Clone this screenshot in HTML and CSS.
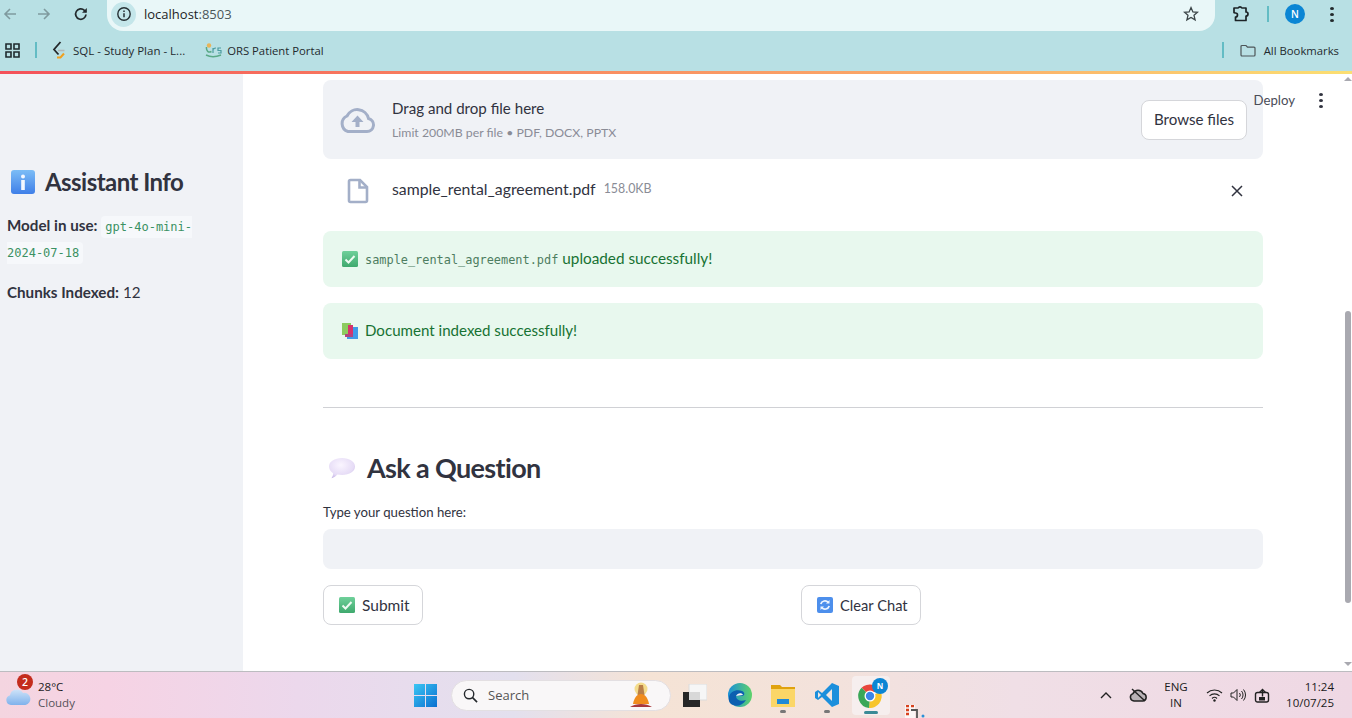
FILE: index.html
```html
<!DOCTYPE html>
<html lang="en">
<head>
<meta charset="utf-8">
<title>localhost:8503</title>
<link rel="stylesheet" href="styles.css">
</head>
<body>
<div class="screen">
  <header class="browser">
    <div class="toolbar">
      <svg class="nav nav-back" viewBox="0 0 16 16"><path d="M14 8H3M8 3L3 8l5 5" fill="none" stroke="#7f9a9e" stroke-width="1.6"/></svg>
      <svg class="nav nav-fwd" viewBox="0 0 16 16"><path d="M2 8h11M8 3l5 5-5 5" fill="none" stroke="#7f9a9e" stroke-width="1.6"/></svg>
      <svg class="nav nav-reload" viewBox="0 0 16 16"><path d="M13 8.5A5.2 5.2 0 1 1 11.4 4.3L13 5.8" fill="none" stroke="#22292c" stroke-width="1.7"/><path d="M13.8 2v4.8H9z" fill="#22292c"/></svg>
      <div class="omnibox">
        <span class="site-info"><svg viewBox="0 0 16 16"><circle cx="8" cy="8" r="6.2" fill="none" stroke="#263034" stroke-width="1.4"/><path d="M8 7.2v4M8 4.6v1.3" stroke="#263034" stroke-width="1.5"/></svg></span>
        <span class="url">localhost<span class="url-port">:8503</span></span>
        <svg class="star" viewBox="0 0 16 16"><path d="M8 1.6l1.9 4.3 4.6.4-3.5 3 1.1 4.6L8 11.4l-4.1 2.5L5 9.3l-3.5-3 4.6-.4z" fill="none" stroke="#3c4548" stroke-width="1.3"/></svg>
      </div>
      <svg class="puzzle" viewBox="0 0 18 18"><path d="M2 3h4.2a2 2 0 0 1 3.6 0H14v4a2 2 0 0 1 0 4v4.5H3.5V12a2 2 0 0 0 0-4L2 7.6z" fill="none" stroke="#1c2326" stroke-width="1.7" stroke-linejoin="round"/></svg>
      <span class="divider divider-top"></span>
      <span class="avatar">N</span>
      <span class="kebab kebab-chrome"><i></i><i></i><i></i></span>
    </div>
    <div class="bookmarks">
      <svg class="apps" viewBox="0 0 15 15"><path d="M1 1h5v5H1zM9 1h5v5H9zM1 9h5v5H1zM9 9h5v5H9z" fill="none" stroke="#1f2a2e" stroke-width="1.6"/></svg>
      <span class="divider divider-apps"></span>
      <svg class="bm-sql" viewBox="0 0 14 18"><path d="M8.500 1L2 8.500l4.500 5" fill="none" stroke="#23282b" stroke-width="1.800"/><path d="M5 16.500h3.500l3.500-4" fill="none" stroke="#f0a020" stroke-width="2"/><path d="M6 9.500h6.500" stroke="#b4b8b8" stroke-width="1.600"/></svg>
      <span class="bm-text bm-sql-text">SQL - Study Plan - L...</span>
      <svg class="bm-ors" viewBox="0 0 17 16"><circle cx="4" cy="3.500" r="2.200" fill="#e8b458"/><path d="M1.500 5c-.5 4 2 6 5 4.500M1 13c4 2 10 2 15 0" fill="none" stroke="#5aa987" stroke-width="1.500"/><path d="M8 6v5M8.500 7c1-1 2-1 2.500-1M16 6h-3v2.500h3V11h-3" fill="none" stroke="#4c9ca0" stroke-width="1.200"/></svg>
      <span class="bm-text bm-ors-text">ORS Patient Portal</span>
      <span class="bm-spacer"></span>
      <span class="divider divider-all"></span>
      <svg class="bm-folder" viewBox="0 0 16 13"><path d="M1 2.500a1 1 0 0 1 1-1h4l1.500 1.700H14a1 1 0 0 1 1 1V11a1 1 0 0 1-1 1H2a1 1 0 0 1-1-1z" fill="none" stroke="#4d5558" stroke-width="1.200"/></svg>
      <span class="bm-text bm-all-text">All Bookmarks</span>
    </div>
    <div class="accent"></div>
  </header>

  <div class="app">
    <aside class="sidebar">
      <h2 class="side-title">
        <svg class="side-emoji" viewBox="0 0 24 24"><defs><linearGradient id="blue" x1="0" y1="0" x2="0" y2="1"><stop offset="0" stop-color="#7cbdf6"/><stop offset="1" stop-color="#3f7fe8"/></linearGradient></defs><rect width="24" height="24" rx="3" fill="url(#blue)"/><circle cx="12" cy="6.500" r="2" fill="#f4f8ff"/><rect x="10.200" y="10" width="3.600" height="10" fill="#f4f8ff"/></svg>
        Assistant Info
      </h2>
      <p class="side-line"><strong>Model in use:</strong> <code class="side-code">gpt-4o-mini-<br>2024-07-18</code></p>
      <p class="side-chunks"><strong>Chunks Indexed:</strong> 12</p>
    </aside>

    <main class="content">
      <section class="uploader">
        <svg class="cloud" viewBox="0 0 37 25"><path d="M29.500 10.500A11.500 11.500 0 0 0 8 8 8.300 8.300 0 0 0 9 23.500h19a6.600 6.600 0 0 0 1.500-13z" fill="none" stroke="#a3afc8" stroke-width="3"/><path d="M18.500 7.500l6 6.500h-4V19h-4v-5h-4z" fill="#a3afc8"/></svg>
        <div class="upload-text">
          <div class="drop-title">Drag and drop file here</div>
          <div class="drop-limit">Limit 200MB per file • PDF, DOCX, PPTX</div>
        </div>
        <button class="btn btn-browse">Browse files</button>
      </section>

      <section class="file-row">
        <svg class="file-icon" viewBox="0 0 22 26"><path d="M2 3.500A1.500 1.500 0 0 1 3.500 2H13l7 7v13.500a1.500 1.500 0 0 1-1.500 1.500h-15A1.500 1.500 0 0 1 2 22.500z" fill="none" stroke="#a3afc8" stroke-width="2.600"/><path d="M12.500 2v7.500H20" fill="none" stroke="#a3afc8" stroke-width="2.600"/></svg>
        <span class="file-name">sample_rental_agreement.pdf</span>
        <span class="file-size">158.0KB</span>
        <svg class="file-x" viewBox="0 0 12 12"><path d="M1 1l10 10M11 1L1 11" stroke="#31333f" stroke-width="1.500"/></svg>
      </section>

      <div class="alert">
        <svg class="emoji-16" viewBox="0 0 16 16"><use href="#check-emoji"/></svg>
        <code class="alert-code">sample_rental_agreement.pdf</code>
        <span class="alert-tail">uploaded successfully!</span>
      </div>
      <div class="alert">
        <svg class="emoji-16" viewBox="0 0 16 16"><rect x="0" y="0" width="9" height="12" fill="#8ccb5e"/><rect x="6" y="2" width="5" height="13" fill="#d6336c"/><rect x="3" y="11" width="8" height="3" fill="#b0457e"/><rect x="11" y="4" width="5" height="12" fill="#3f9be8"/><rect x="5" y="14" width="11" height="2" fill="#3f9be8"/></svg>
        <span class="alert-text">Document indexed successfully!</span>
      </div>

      <hr class="rule">

      <h2 class="ask-title">
        <svg class="bubble" viewBox="0 0 28 22"><defs><radialGradient id="bub" cx=".45" cy=".35" r=".72"><stop offset="0" stop-color="#faf5ff"/><stop offset=".7" stop-color="#e6dcf6"/><stop offset="1" stop-color="#bfaee4"/></radialGradient></defs><path d="M14 1c7.500 0 13 3.600 13 8.500S21.500 18 14 18c-1.500 0-3 0-4.500-.4-1.500 1.500-3.500 3-6 3.600 1-1.500 1.600-3 1.600-5C2.500 14.500 1 12 1 9.500 1 4.600 6.500 1 14 1z" fill="url(#bub)"/></svg>
        Ask a Question
      </h2>
      <label class="q-label" for="q">Type your question here:</label>
      <input class="q-input" id="q" type="text">

      <div class="actions">
        <div class="action-col">
          <button class="btn btn-action btn-submit">
            <svg class="emoji-16" viewBox="0 0 16 16"><defs><linearGradient id="chk" x1="0" y1="0" x2="0" y2="1"><stop offset="0" stop-color="#6fd09a"/><stop offset="1" stop-color="#3fa96e"/></linearGradient><g id="check-emoji"><rect width="16" height="16" rx="1.500" fill="url(#chk)"/><path d="M3.500 8.500l3 3 6-6.500" fill="none" stroke="#eefaf2" stroke-width="2"/></g></defs><use href="#check-emoji"/></svg>
            Submit
          </button>
        </div>
        <div class="action-col">
          <button class="btn btn-action btn-clear">
            <svg class="emoji-16" viewBox="0 0 16 16"><rect width="16" height="16" rx="2" fill="#4d8fec"/><path d="M3.800 7a4.300 4.300 0 0 1 7.400-1.600M12.200 9a4.300 4.300 0 0 1-7.400 1.600" fill="none" stroke="#eef5ff" stroke-width="1.700"/><path d="M12.500 3v3.500H9zM3.500 13V9.500H7z" fill="#eef5ff"/></svg>
            Clear Chat
          </button>
        </div>
      </div>
    </main>

    <div class="scrollbar">
      <span class="sb-up"></span>
      <span class="sb-thumb"></span>
      <span class="sb-down"></span>
    </div>

    <div class="deploy-bar">
      <span class="deploy">Deploy</span>
      <span class="kebab kebab-app"><i></i><i></i><i></i></span>
    </div>
  </div>

  <footer class="taskbar">
    <div class="weather">
      <svg class="weather-icon" viewBox="0 0 26 20"><defs><linearGradient id="wcl" x1="0" y1="0" x2="0" y2="1"><stop offset="0" stop-color="#cfe3f8"/><stop offset="1" stop-color="#7fb2ec"/></linearGradient></defs><path d="M6 19a5 5 0 0 1-1-9.800A7 7 0 0 1 18 7a6 6 0 0 1 2.500 12z" fill="url(#wcl)"/></svg>
      <span class="badge">2</span>
      <div class="weather-text">
        <span class="temp">28°C</span>
        <span class="cond">Cloudy</span>
      </div>
    </div>

    <div class="tasks">
      <svg class="win" viewBox="0 0 23 23"><defs><linearGradient id="wg" x1="0" y1="0" x2="1" y2="1"><stop offset="0" stop-color="#3bc6f4"/><stop offset="1" stop-color="#0a6fd0"/></linearGradient></defs><path d="M0 0h11v11H0zM12 0h11v11H12zM0 12h11v11H0zM12 12h11v11H12z" fill="url(#wg)"/></svg>
      <div class="search">
        <svg class="search-glass" viewBox="0 0 16 16"><circle cx="6.500" cy="6.500" r="5" fill="none" stroke="#24282c" stroke-width="1.500"/><path d="M10.200 10.200L15 15" stroke="#24282c" stroke-width="1.700"/></svg>
        <span class="search-text">Search</span>
        <svg class="search-art" viewBox="0 0 24 26"><circle cx="12" cy="7" r="6.500" fill="#f4dc8c"/><path d="M10 3h4l1.500 10h-7z" fill="#b97f48"/><path d="M4 22c1-6 4-10 8-10s7 4 8 10z" fill="#f08c1e"/><path d="M1 25c6-4 16-4 22 0z" fill="#a8383c"/></svg>
      </div>
      <svg class="taskview" viewBox="0 0 24 23"><rect x="6" y="0" width="18" height="16" fill="#f6f6f6" stroke="#dcdcdc"/><rect x="0" y="8" width="17" height="15" fill="#262626"/><rect x="6" y="8" width="11" height="8" fill="#d8d8d8"/></svg>
      <svg class="edge" viewBox="0 0 24 24"><defs><linearGradient id="eg" x1="0" y1="0" x2="1" y2="0"><stop offset="0" stop-color="#1a8fd8"/><stop offset="1" stop-color="#5fd36a"/></linearGradient></defs><circle cx="12" cy="12" r="12" fill="url(#eg)"/><path d="M1 14c1-6 8-8 13-6 3 1 3 5 0 5H8c0 4 5 6 10 4-3 5-9 7-13 5C2 21 0 18 1 14z" fill="#0c5fb0"/><path d="M8 13c1-3 6-4 7-1z" fill="#f4f6f0"/></svg>
      <span class="pinned pinned-folder">
        <svg viewBox="0 0 24 24"><path d="M0 2h9l2 2h13v20H0z" fill="#e0a20e"/><path d="M0 6h24v18H0z" fill="#fbd667"/><path d="M6 16h12v5H6z" fill="#1f8ad8"/></svg>
        <i class="pin-dot"></i>
      </span>
      <span class="pinned pinned-code">
        <svg viewBox="0 0 24 24"><path d="M17 0l7 3v18l-7 3-10-10-4 3-3-2v-6l3-2 4 3z" fill="#1b8fdc"/><path d="M17 6l-6 6 6 6z" fill="#f0e6e2"/><path d="M3 9v6l3-3z" fill="#f0e6e2"/></svg>
        <i class="pin-dot"></i>
      </span>
      <span class="chrome-tile">
        <svg class="chrome" viewBox="0 0 24 24"><path d="M12 12L3.600 3.800A12 12 0 0 1 23 8H12z" fill="#e8453c"/><path d="M12 12L23 8A12 12 0 0 1 11 24z" fill="#f7c52c"/><path d="M12 12L11 24A12 12 0 0 1 3.600 3.800z" fill="#3aa757"/><circle cx="12" cy="12" r="5.500" fill="#fff"/><circle cx="12" cy="12" r="4.200" fill="#3a85e8"/></svg>
        <span class="chrome-badge">N</span>
        <i class="chrome-line"></i>
      </span>
    </div>

    <div class="tray">
      <svg class="tray-chev" viewBox="0 0 12 8"><path d="M1 7l5-5 5 5" fill="none" stroke="#222" stroke-width="1.400"/></svg>
      <svg class="tray-cloud" viewBox="0 0 18 14"><path d="M5 13a3.800 3.800 0 0 1-1-7.400A5.500 5.500 0 0 1 14 5.500a3.800 3.800 0 0 1 0 7.500z" fill="#b9b2b6" stroke="#222" stroke-width="1.500"/><path d="M3 1l13 12" stroke="#222" stroke-width="1.400"/></svg>
      <div class="lang"><span>ENG</span><span>IN</span></div>
      <svg class="tray-wifi" viewBox="0 0 17 14"><path d="M1 5a11 11 0 0 1 15 0M3.500 7.800a7.400 7.400 0 0 1 10 0M6 10.500a3.600 3.600 0 0 1 5 0" fill="none" stroke="#222" stroke-width="1.100"/><circle cx="8.500" cy="12.500" r="1.200" fill="#222"/></svg>
      <svg class="tray-vol" viewBox="0 0 17 14"><path d="M1 5h2.500L7 1.500v11L3.500 9H1z" fill="none" stroke="#222" stroke-width="1"/><path d="M9.500 5a3 3 0 0 1 0 4M11.500 3a6 6 0 0 1 0 8M13.500 1.500a8.500 8.500 0 0 1 0 11" fill="none" stroke="#222" stroke-width="1"/></svg>
      <svg class="tray-bat" viewBox="0 0 16 15"><rect x="1.500" y="4.500" width="13" height="9.500" rx="2" fill="#f0dbe6" stroke="#222" stroke-width="1.400"/><path d="M8.500 8.500V2M5.500 4.500L8.500 1.500l3 3" fill="none" stroke="#222" stroke-width="1.400"/><path d="M5 9h6v3.500H5z" fill="#222"/></svg>
      <div class="clock"><span>11:24</span><span>10/07/25</span></div>
    </div>

    <svg class="tray-stray" viewBox="0 0 20 13"><rect x="0" y="0" width="10" height="13" fill="#fff" opacity=".7"/><path d="M1 1h3M1 5h3M1 9h3M6 1h3" stroke="#d8421e" stroke-width="2.500"/><path d="M6 5h6v8" fill="none" stroke="#555" stroke-width="1.800"/><circle cx="18" cy="11" r="1.500" fill="#2a90d8"/></svg>
  </footer>
</div>
</body>
</html>
```
FILE: styles.css
```css
* { box-sizing: border-box; }
html, body { margin: 0; height: 100%; overflow: hidden; }
body { font-family: "Lato", "Noto Sans", sans-serif; color: #31333f; background: #fff; }
svg { display: block; flex: none; }
h2, p { margin: 0; }

.screen { width: 1352px; height: 718px; display: flex; flex-direction: column; }

/* Browser chrome */
.browser { height: 74px; flex: none; background: #b8e0e4; font-family: "Open Sans", sans-serif; display: flex; flex-direction: column; }
.toolbar { height: 31px; display: flex; align-items: center; padding-left: 2px; }
.nav { width: 16px; height: 16px; margin-top: -3px; }
.nav-fwd { margin-left: 18px; }
.nav-reload { margin-left: 21px; margin-right: 18px; }
.omnibox { width: 1108px; height: 31px; background: #e9f7f8; border-radius: 16px; border-top-right-radius: 0; border-top-left-radius: 0; display: flex; align-items: center; padding: 0 16px 0 4px; }
.site-info { width: 25px; height: 25px; border-radius: 50%; background: #c4e6ea; display: flex; align-items: center; justify-content: center; margin-top: -3px; }
.site-info svg { width: 16px; height: 16px; }
.url { font-size: 13px; color: #1d2426; margin-left: 8px; margin-top: -3px; flex: 1; }
.url-port { color: #4b5659; }
.star { width: 16px; height: 16px; margin-top: -3px; }
.puzzle { width: 18px; height: 18px; margin-left: 17px; margin-top: -3px; }
.divider { display: block; width: 2px; height: 16px; background: #63bcc4; flex: none; }
.divider-top { margin-left: 17px; margin-top: -3px; }
.avatar { width: 20px; height: 20px; margin-left: 16px; margin-top: -3px; border-radius: 50%; background: #0b86d4; color: #fff; font-size: 10px; display: flex; align-items: center; justify-content: center; font-weight: 600; }
.kebab { display: flex; flex-direction: column; gap: 3px; width: 4px; flex: none; }
.kebab i { display: block; width: 4px; height: 3px; background: #22292c; border-radius: 50%; }
.kebab-chrome { margin-left: 25px; margin-top: -3px; }

.bookmarks { height: 40px; display: flex; align-items: center; padding-left: 5px; padding-right: 13px; }
.apps { width: 15px; height: 15px; margin-top: -2px; }
.divider-apps { margin-left: 15px; margin-right: 15px; margin-top: -2px; }
.bm-sql { width: 14px; height: 18px; margin-top: -2px; }
.bm-text { font-size: 11.500px; color: #1f2a2e; white-space: nowrap; margin-top: -2px; }
.bm-sql-text { margin-left: 7px; margin-right: 20px; }
.bm-ors { width: 17px; height: 16px; margin-right: 5px; margin-top: -2px; }
.bm-ors-text { font-size: 11.300px; }
.bm-spacer { flex: 1; }
.divider-all { margin-right: 16px; margin-top: -2px; }
.bm-folder { width: 16px; height: 13px; margin-right: 8px; margin-top: -2px; }
.bm-all-text { font-size: 11.300px; }
.accent { height: 3px; background: linear-gradient(90deg, #f4515a 0%, #f8835f 35%, #fbb26a 75%, #fbdf72 100%); }

/* App */
.app { position: relative; flex: 1; min-height: 0; display: flex; background: #fff; overflow: hidden; }
.sidebar { width: 243px; flex: none; background: #f0f2f6; padding: 92px 0 0 7px; }
.side-title { display: flex; align-items: center; gap: 10px; font-size: 24px; font-weight: 700; color: #31333f; line-height: 32px; margin-left: 4px; letter-spacing: -.55px; }
.side-emoji { width: 24px; height: 24px; }
.side-line { margin-top: 14px; line-height: 26px; font-size: 15.200px; }
.side-line strong, .side-chunks strong { font-weight: 700; }
.side-code { font-family: "DejaVu Sans Mono", monospace; font-size: 12px; line-height: 1; color: #3b9163; background: #f6f8fb; padding: 4px; border-radius: 4px; }
.side-chunks { margin-top: 15px; line-height: 26px; font-size: 15.200px; }

.content { width: 940px; flex: none; margin-left: 80px; padding-top: 6px; display: flex; flex-direction: column; }
.uploader { height: 79px; flex: none; background: #f0f2f6; border-radius: 8px; display: flex; align-items: center; padding: 0 16px 0 16px; }
.cloud { width: 37px; height: 25px; margin-top: 1px; }
.upload-text { flex: 1; margin-left: 16px; margin-top: -1px; }
.drop-title { font-size: 15.100px; line-height: 22px; }
.drop-limit { font-size: 12.300px; line-height: 18px; margin-top: 5px; color: #8a8c96; }
.btn { font-family: inherit; font-size: 15.100px; color: #31333f; background: #fff; border: 1px solid #d5d6da; border-radius: 8px; height: 40px; cursor: pointer; }
.btn-browse { width: 106px; padding: 0 0 2px; }

.file-row { height: 61px; flex: none; display: flex; align-items: center; padding: 0 20px 0 24px; margin-bottom: 11px; }
.file-icon { width: 22px; height: 26px; margin-top: 3px; }
.file-name { font-size: 15.800px; margin-left: 23px; margin-top: -2px; }
.file-size { font-size: 12.400px; color: #8a8c96; margin-left: 8px; margin-top: -2px; flex: 1; }
.file-x { width: 12px; height: 12px; margin-top: 3px; }

.alert { height: 56px; flex: none; background: #e8f8ee; border-radius: 8px; display: flex; align-items: center; padding: 0 18px 0 19px; margin-bottom: 16px; color: #177233; font-size: 15.300px; }
.emoji-16 { width: 16px; height: 16px; }
.alert-code { font-family: "DejaVu Sans Mono", monospace; font-size: 11.900px; color: #4d7d60; margin-left: 7px; margin-top: 2px; }
.alert-tail { margin-left: 4px; margin-top: -2px; }
.alert-text { margin-left: 7px; margin-top: -2px; font-size: 15.100px; }
.rule { height: 1px; border: 0; background: #d0d1d5; margin: 32px 0 0 0; flex: none; }

.ask-title { display: flex; align-items: center; font-size: 27px; font-weight: 700; line-height: 40px; margin-top: 40px; padding-left: 5px; letter-spacing: -.65px; color: #31333f; }
.bubble { width: 28px; height: 22px; margin-right: 11px; }
.q-label { display: block; font-size: 13.200px; line-height: 18px; margin-top: 15px; }
.q-input { display: block; width: 100%; height: 40px; margin-top: 8px; border: 0; border-radius: 8px; background: #f0f2f6; flex: none; }
.actions { display: grid; grid-template-columns: 1fr 1fr; gap: 16px; margin-top: 16px; }
.btn-action { display: inline-flex; align-items: center; gap: 7px; padding: 0 0 0 15px; }
.btn-submit { width: 100px; font-size: 15.500px; }
.btn-clear { width: 120px; font-size: 14.700px; }

.scrollbar { position: absolute; top: 0; right: 0; bottom: 0; width: 8px; display: flex; flex-direction: column; align-items: center; padding-top: 3px; }
.sb-up { width: 0; height: 0; border-left: 4px solid transparent; border-right: 4px solid transparent; border-bottom: 4px solid #a9a9b0; }
.sb-thumb { width: 6px; height: 292px; background: #a9a9b0; border-radius: 3px; margin-top: 230px; }
.sb-down { width: 0; height: 0; border-left: 4px solid transparent; border-right: 4px solid transparent; border-top: 4px solid #a9a9b0; margin-top: 59px; }

.deploy-bar { position: absolute; top: 18px; right: 29px; display: flex; align-items: center; gap: 24px; }
.deploy { font-size: 13.200px; color: #4a4c57; margin-top: 0; }
.kebab-app i { background: #31333f; }

/* Taskbar */
.taskbar { position: relative; height: 47px; flex: none; border-top: 1px solid #bcbcc0; display: flex; align-items: center; font-family: "Open Sans", sans-serif; font-size: 11.500px; color: #1a1a1a; background: linear-gradient(90deg, #f4d5e0 0%, #f6d3e4 8%, #ecd8ec 22%, #e3e0ee 38%, #f5e3d5 48%, #f3e2dc 62%, #f0dfe6 75%, #efd8e4 100%); }
.weather { position: relative; width: 414px; flex: none; display: flex; align-items: center; padding-left: 5px; }
.weather-icon { width: 26px; height: 20px; margin-top: 2px; }
.badge { position: absolute; left: 17px; top: -5px; width: 16px; height: 16px; border-radius: 50%; background: #c42b1c; color: #fff; font-size: 10.500px; font-weight: 600; display: flex; align-items: center; justify-content: center; }
.weather-text { display: flex; flex-direction: column; margin-left: 7px; line-height: 16px; }
.cond { color: #55525a; }
.tasks { display: flex; align-items: center; flex: none; }
.win { width: 23px; height: 23px; }
.search { width: 220px; height: 31px; margin-left: 14px; border-radius: 16px; background: #f9f7f8; border: 1px solid #e3dfe2; display: flex; align-items: center; padding: 0 17px 0 11px; }
.search-glass { width: 15px; height: 15px; }
.search-text { font-size: 13px; color: #555; margin-left: 10px; flex: 1; }
.search-art { width: 24px; height: 26px; }
.taskview { width: 24px; height: 23px; margin-left: 12px; }
.edge { width: 24px; height: 24px; margin-left: 21px; }
.pinned { position: relative; width: 24px; height: 24px; margin-left: 19px; }
.pinned svg { width: 24px; height: 24px; }
.pin-dot { position: absolute; left: 9px; top: 27px; width: 6px; height: 3px; border-radius: 2px; background: #777; }
.pinned-code { margin-left: 20px; }
.chrome-tile { position: relative; width: 38px; height: 39px; margin-left: 13px; background: #f6eeee; border-radius: 4px; display: flex; align-items: center; justify-content: center; }
.chrome { width: 24px; height: 24px; margin-top: 1px; margin-left: -2px; }
.chrome-badge { position: absolute; left: 20px; top: 2px; width: 16px; height: 16px; border-radius: 50%; background: #0b86d4; color: #fff; font-size: 8px; font-weight: 700; display: flex; align-items: center; justify-content: center; }
.chrome-line { position: absolute; left: 12px; bottom: 1px; width: 14px; height: 3px; border-radius: 2px; background: #3a8a96; }
.tray { flex: 1; display: flex; align-items: center; padding-left: 210px; }
.tray-chev { width: 12px; height: 8px; }
.tray-cloud { width: 18px; height: 14px; margin-left: 17px; }
.lang { width: 40px; margin-left: 9px; display: flex; flex-direction: column; align-items: center; line-height: 16px; }
.tray-wifi { width: 17px; height: 14px; margin-left: 10px; }
.tray-vol { width: 17px; height: 14px; margin-left: 7px; }
.tray-bat { width: 16px; height: 15px; margin-left: 7px; }
.clock { flex: 1; display: flex; flex-direction: column; align-items: flex-end; line-height: 16px; padding-right: 18px; }
.tray-stray { position: absolute; left: 905px; top: 33px; width: 20px; height: 13px; }
```
